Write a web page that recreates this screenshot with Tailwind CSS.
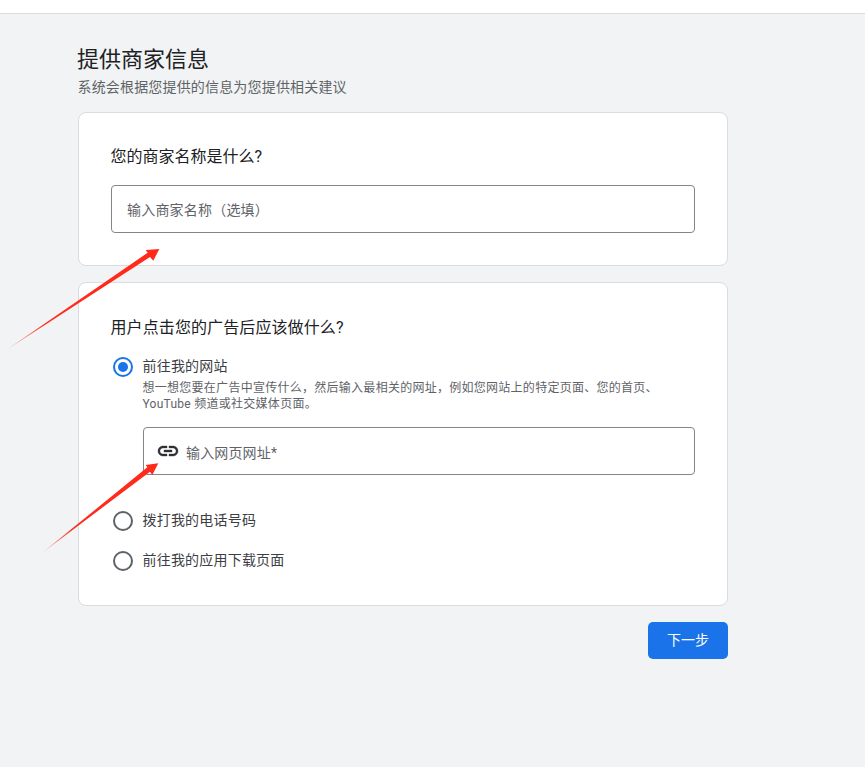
<!DOCTYPE html>
<html lang="zh-CN">
<head>
<meta charset="utf-8">
<script src="https://cdn.jsdelivr.net/npm/@tailwindcss/browser@4"></script>
<title>提供商家信息</title>
</head>
<body class="relative h-[767px] w-[865px] overflow-hidden bg-[#f1f3f4] font-['Roboto','Noto_Sans_CJK_SC',sans-serif] text-[#202124]">
<div class="h-[14px] border-b border-[#dadce0] bg-white"></div>
<main class="ml-[78px] w-[650px] pt-[32px]">
  <h1 class="h-[28px] -translate-x-[1px] text-[22px] leading-[28px] font-normal">提供商家信息</h1>
  <p class="mt-[3px] h-[20px] -translate-x-[0.5px] text-[14px] leading-[20px] tracking-[0.17px] text-[#5f6368]">系统会根据您提供的信息为您提供相关建议</p>
  <section class="mt-[15px] h-[154px] rounded-lg border border-[#dadce0] bg-white pl-[32px] pr-[32px] pt-[32px]">
    <h2 class="h-[24px] -translate-x-[0.5px] text-[16px] leading-[24px] font-normal">您的商家名称是什么?</h2>
    <div class="mt-[16px] flex h-[48px] items-center rounded border border-[#80868b] px-[15px] pt-[3px] text-[14px] tracking-[0.2px] text-[#5f6368]">输入商家名称（选填）</div>
  </section>
  <section class="mt-[16px] h-[324px] rounded-lg border border-[#dadce0] bg-white pl-[32px] pr-[32px] pt-[33px]">
    <h2 class="h-[24px] -translate-x-[0.5px] text-[16px] leading-[24px] tracking-[0.1px] font-normal">用户点击您的广告后应该做什么?</h2>
    <div class="mt-[16px] flex gap-[9.5px] pl-[2px]">
      <span class="mt-[1px] flex h-[20px] w-[20px] shrink-0 items-center justify-center rounded-full border-[2.5px] border-[#1a73e8]"><span class="h-[10px] w-[10px] rounded-full bg-[#1a73e8]"></span></span>
      <div>
        <div class="h-[20px] text-[14px] leading-[20px] tracking-[0.2px] text-[#3c4043]">前往我的网站</div>
        <p class="mt-[4px] w-[530px] text-[12px] leading-[16px] tracking-[0.27px] text-[#5f6368]">想一想您要在广告中宣传什么，然后输入最相关的网址，例如您网站上的特定页面、您的首页、YouTube 频道或社交媒体页面。</p>
      </div>
    </div>
    <div class="ml-[32px] mt-[15px] flex h-[48px] items-center gap-[6px] rounded border border-[#80868b] pl-[12px] text-[14px] text-[#5f6368]">
      <svg class="h-[24px] w-[24px] shrink-0" viewBox="0 0 24 24" fill="#303134" stroke="#303134" stroke-width="0.4"><path d="M3.9 12c0-1.71 1.39-3.1 3.1-3.1h4V7H7c-2.76 0-5 2.24-5 5s2.24 5 5 5h4v-1.9H7c-1.71 0-3.1-1.39-3.1-3.1zM8 13h8v-2H8v2zm9-6h-4v1.9h4c1.71 0 3.1 1.39 3.1 3.1s-1.39 3.1-3.1 3.1h-4V17h4c2.76 0 5-2.24 5-5s-2.24-5-5-5z"/></svg>
      <span class="pt-[4px] tracking-[0.15px]">输入网页网址*</span>
    </div>
    <div class="mt-[35px] flex h-[20px] items-center gap-[9.5px] pl-[2px] text-[14px] tracking-[0.2px] text-[#3c4043]">
      <span class="h-[20px] w-[20px] shrink-0 translate-y-[1px] rounded-full border-[2.5px] border-[#5f6368]"></span>
      <span>拨打我的电话号码</span>
    </div>
    <div class="mt-[20px] flex h-[20px] items-center gap-[9.5px] pl-[2px] text-[14px] tracking-[0.2px] text-[#3c4043]">
      <span class="h-[20px] w-[20px] shrink-0 translate-y-[1px] rounded-full border-[2.5px] border-[#5f6368]"></span>
      <span>前往我的应用下载页面</span>
    </div>
  </section>
  <div class="mt-[16px] flex justify-end">
    <button class="h-[37px] w-[80px] rounded-[5px] bg-[#1a73e8] text-[14px] text-white">下一步</button>
  </div>
</main>
<svg class="absolute left-0 top-0 h-[767px] w-[865px]" viewBox="0 0 865 767">
  <defs>
    <linearGradient id="a1" gradientUnits="userSpaceOnUse" x1="8" y1="349" x2="160" y2="248"><stop offset="0" stop-color="#ff2a1a" stop-opacity="0.4"/><stop offset="0.25" stop-color="#ff2a1a"/></linearGradient>
    <linearGradient id="a2" gradientUnits="userSpaceOnUse" x1="44" y1="551" x2="158" y2="462"><stop offset="0" stop-color="#ff2a1a" stop-opacity="0.4"/><stop offset="0.25" stop-color="#ff2a1a"/></linearGradient>
  </defs>
  <path fill="url(#a1)" d="M7 349.5 L147.7 252.7 L145.7 250 L159.3 249 L153.3 260.7 L150 257 Z"/>
  <path fill="url(#a2)" d="M42 553 L147.3 467.3 L145.7 465 L158.3 463.3 L152.3 475 L150 471.7 Z"/>
</svg>
</body>
</html>
